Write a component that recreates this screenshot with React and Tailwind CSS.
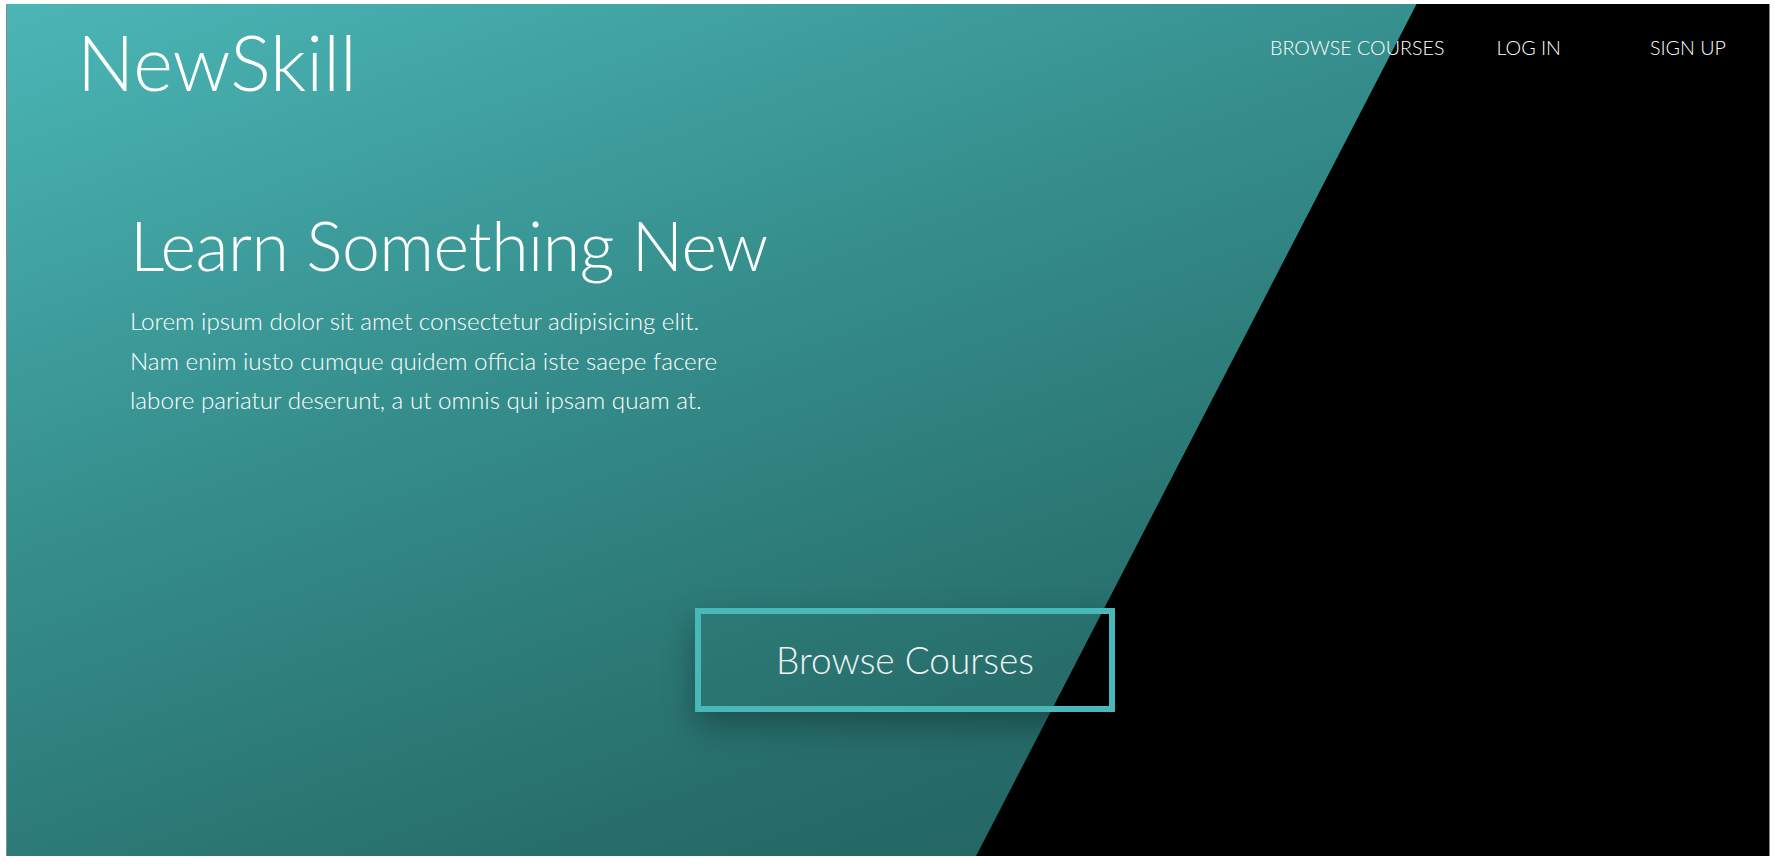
export default function App() {
  return (
    <div className="w-[1775px] h-[868px] bg-white pt-[4px] pl-[6px] pr-[5px] pb-[12px] flex" style={{ fontFamily: "Lato, 'Open Sans', sans-serif" }}>
      <div className="relative flex-1 overflow-hidden border-x border-[#8a8a8a] bg-[linear-gradient(160deg,#4bb6b6_0%,#36908e_35%,#276e6b_70%,#1f5a57_100%)]">
        <div className="absolute inset-0 bg-black [clip-path:polygon(80%_0,100%_0,100%_100%,55%_100%)]" />
        <div className="relative flex flex-col h-full">
          <header className="flex justify-between items-start pl-[70px] pr-[43px] pt-[20px]">
            <div className="text-[76px] leading-none font-light text-white">NewSkill</div>
            <nav className="flex items-center text-[19.7px] leading-none font-light text-white pt-[14px]">
              <a>BROWSE COURSES</a>
              <a className="ml-[52px]">LOG IN</a>
              <a className="ml-[89px]">SIGN UP</a>
            </nav>
          </header>
          <section className="pl-[123px] mt-[111px]">
            <h1 className="text-[68px] leading-none font-light text-white tracking-[-0.5px]">Learn Something New</h1>
            <p className="mt-[22px] w-[600px] text-[24.2px] leading-[39.6px] font-light text-white">
              Lorem ipsum dolor sit amet consectetur adipisicing elit. Nam enim iusto cumque quidem officia iste saepe facere labore pariatur deserunt, a ut omnis qui ipsam quam at.
            </p>
          </section>
          <div className="mt-[188px] ml-[688px]">
            <button className="w-[420px] h-[104px] border-[6px] border-[#48b8b8] bg-transparent text-[37px] font-light text-[#f2f2f2] shadow-[0_14px_30px_rgba(0,0,0,0.3)]">
              Browse Courses
            </button>
          </div>
        </div>
      </div>
    </div>
  );
}
